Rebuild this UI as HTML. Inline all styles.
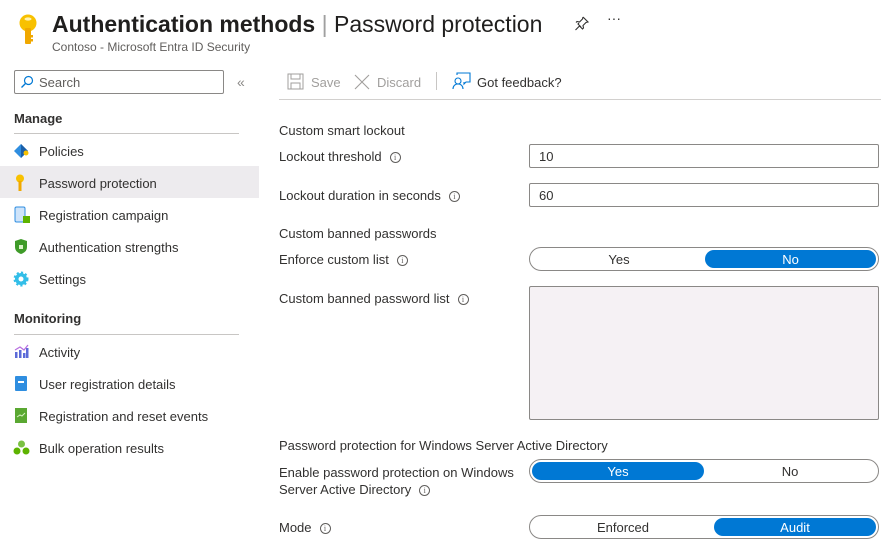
<!DOCTYPE html>
<html><head><meta charset="utf-8"><style>
*{margin:0;padding:0;box-sizing:border-box}
body{width:881px;height:542px;overflow:hidden;background:#fff;font-family:"Liberation Sans",sans-serif;color:#323130;font-size:13px;position:relative}
.a{position:absolute;white-space:nowrap}
.t{font-size:13px;line-height:16px}
.info{display:inline-block;width:11px;height:11px;border:1px solid #605e5c;border-radius:50%;font-size:8px;line-height:9px;text-align:center;color:#605e5c;vertical-align:middle;margin-left:8px;font-family:"Liberation Serif",serif}
.inp{position:absolute;left:529px;width:350px;height:24px;border:1px solid #8a8886;border-radius:2px;padding-left:9px;line-height:23px}
.tog{position:absolute;left:529px;width:350px;height:24px;border:1px solid #8a8886;border-radius:12px}
.tog span{position:absolute;top:2px;height:18px;line-height:19px;text-align:center;border-radius:9px}
.sel{background:#0078d4;color:#fff}
.hdr{font-weight:bold;font-size:13px}
</style></head><body>
<svg class="a" style="left:17px;top:14px" width="22" height="32" viewBox="0 0 22 32"><circle cx="11" cy="9" r="8.5" fill="#f8c100"/><rect x="8" y="14" width="6" height="16" rx="1" fill="#f0a800"/><rect x="13" y="21" width="3" height="2.5" fill="#f0a800"/><rect x="13" y="25" width="3" height="2.5" fill="#f0a800"/><ellipse cx="11" cy="5" rx="3.5" ry="1.6" fill="#fff3b0"/></svg>
<div class="a" style="left:52px;top:9px;font-size:23px;line-height:30px;color:#201f1e"><b style="font-weight:600">Authentication methods</b> <span style="color:#a0a0a0">|</span> Password protection</div>
<div class="a" style="left:52px;top:40px;font-size:12px;color:#605e5c">Contoso - Microsoft Entra ID Security</div>
<svg class="a" style="left:574px;top:15px" width="16" height="16" viewBox="0 0 16 16"><path d="M9 2l5 5-2 .5-3 3 .5 2.5-1 1-3-3-4 4M5 8l-1 1 3 3M9 2l-.5 2-3 3L3 6.5l-1 1" fill="none" stroke="#323130" stroke-width="1.1"/></svg>
<div class="a" style="left:607px;top:10px;font-size:14px;color:#323130">···</div>
<div class="a" style="left:14px;top:70px;width:210px;height:24px;border:1px solid #8a8886;border-radius:2px"></div>
<svg class="a" style="left:20px;top:75px" width="14" height="14" viewBox="0 0 14 14"><circle cx="8.5" cy="5.5" r="4" fill="none" stroke="#0078d4" stroke-width="1.2"/><path d="M5.5 8.5L1.5 12.5" stroke="#0078d4" stroke-width="1.3"/></svg>
<div class="a t" style="left:39px;top:75px;color:#605e5c">Search</div>
<div class="a" style="left:237px;top:74px;color:#8a8886;font-size:14px">«</div>
<div class="a t hdr" style="left:14px;top:111px">Manage</div>
<div class="a" style="left:14px;top:133px;width:225px;height:1px;background:#c8c6c4"></div>
<div class="a" style="left:0;top:166px;width:259px;height:32px;background:#edebee"></div>
<svg class="a" style="left:13px;top:143px" width="18" height="16" viewBox="0 0 18 16"><path d="M8 1l7 7-7 7-7-7z" fill="#2f8ee0"/><path d="M8 1l7 7-7 7z" fill="#1a5fa8"/><circle cx="13" cy="10" r="2.5" fill="#f8c100"/></svg>
<svg class="a" style="left:15px;top:174px" width="10" height="18" viewBox="0 0 10 18"><circle cx="5" cy="4.5" r="4" fill="#f8c100"/><rect x="3.5" y="7" width="3" height="10" fill="#f0a800"/></svg>
<svg class="a" style="left:14px;top:206px" width="16" height="18" viewBox="0 0 16 18"><rect x="1" y="1" width="10" height="15" rx="1.5" fill="#cfe4fa" stroke="#2f8ee0"/><rect x="9" y="10" width="7" height="7" fill="#5db300"/></svg>
<svg class="a" style="left:14px;top:238px" width="14" height="17" viewBox="0 0 14 17"><path d="M7 1l6 2v6c0 4-3 6-6 7-3-1-6-3-6-7V3z" fill="#3f9b29"/><rect x="5" y="7" width="4" height="4" fill="#d9f2c8"/></svg>
<svg class="a" style="left:13px;top:271px" width="16" height="16" viewBox="0 0 16 16"><circle cx="8" cy="8" r="6" fill="#32bee8" stroke="#32bee8" stroke-width="3" stroke-dasharray="2 2"/><circle cx="8" cy="8" r="2.5" fill="#fff"/></svg>
<div class="a t" style="left:39px;top:144px">Policies</div>
<div class="a t" style="left:39px;top:176px">Password protection</div>
<div class="a t" style="left:39px;top:208px">Registration campaign</div>
<div class="a t" style="left:39px;top:240px">Authentication strengths</div>
<div class="a t" style="left:39px;top:272px">Settings</div>
<div class="a t hdr" style="left:14px;top:311px">Monitoring</div>
<div class="a" style="left:14px;top:334px;width:225px;height:1px;background:#c8c6c4"></div>
<svg class="a" style="left:14px;top:344px" width="15" height="15" viewBox="0 0 15 15"><rect x="1" y="8" width="2.5" height="6" fill="#5c6bd8"/><rect x="5" y="6" width="2.5" height="8" fill="#5c6bd8"/><rect x="9" y="9" width="2.5" height="5" fill="#5c6bd8"/><rect x="12" y="4" width="2.5" height="10" fill="#5c6bd8"/><path d="M1 6l5-3 4 3 4-5" fill="none" stroke="#b86ee0" stroke-width="1.2"/></svg>
<svg class="a" style="left:15px;top:376px" width="12" height="16" viewBox="0 0 12 16"><rect x="0" y="0" width="12" height="15" rx="1" fill="#2f8ee0"/><rect x="3" y="5" width="6" height="2" fill="#fff"/></svg>
<svg class="a" style="left:15px;top:408px" width="12" height="15" viewBox="0 0 12 15"><rect x="0" y="0" width="12" height="15" fill="#5aa832"/><path d="M2 9l3-2 2 1 3-3" stroke="#d6f0c0" fill="none"/></svg>
<svg class="a" style="left:13px;top:440px" width="17" height="16" viewBox="0 0 17 16"><circle cx="8.5" cy="4" r="3.5" fill="#7ac143"/><circle cx="4" cy="11" r="3.5" fill="#5db300"/><circle cx="13" cy="11" r="3.5" fill="#5db300"/></svg>
<div class="a t" style="left:39px;top:345px">Activity</div>
<div class="a t" style="left:39px;top:377px">User registration details</div>
<div class="a t" style="left:39px;top:409px">Registration and reset events</div>
<div class="a t" style="left:39px;top:441px">Bulk operation results</div>
<svg class="a" style="left:287px;top:73px" width="17" height="17" viewBox="0 0 17 17"><rect x="1" y="1" width="15" height="15" fill="none" stroke="#a19f9d"/><rect x="4" y="1" width="9" height="5" fill="none" stroke="#a19f9d"/><rect x="4" y="10" width="9" height="6" fill="none" stroke="#a19f9d"/></svg>
<div class="a t" style="left:311px;top:75px;color:#a19f9d">Save</div>
<svg class="a" style="left:354px;top:74px" width="16" height="16" viewBox="0 0 16 16"><path d="M1 1l14 14M15 1L1 15" stroke="#a19f9d" stroke-width="1.1"/></svg>
<div class="a t" style="left:377px;top:75px;color:#a19f9d">Discard</div>
<div class="a" style="left:436px;top:72px;width:1px;height:18px;background:#c8c6c4"></div>
<svg class="a" style="left:452px;top:72px" width="19" height="18" viewBox="0 0 19 18"><path d="M5 3V1h13v9h-4l-2 2v-2" fill="none" stroke="#0078d4" stroke-width="1.1"/><circle cx="6" cy="9" r="3" fill="none" stroke="#0078d4" stroke-width="1.1"/><path d="M1 17c0-3 2-5 5-5s5 2 5 5" fill="none" stroke="#0078d4" stroke-width="1.1"/></svg>
<div class="a t" style="left:477px;top:75px">Got feedback?</div>
<div class="a" style="left:279px;top:99px;width:602px;height:1px;background:#d2d0ce"></div>
<div class="a t" style="left:279px;top:123px">Custom smart lockout</div>
<div class="a t" style="left:279px;top:149px">Lockout threshold<span class="info">i</span></div>
<div class="inp" style="top:144px">10</div>
<div class="a t" style="left:279px;top:188px">Lockout duration in seconds<span class="info">i</span></div>
<div class="inp" style="top:183px">60</div>
<div class="a t" style="left:279px;top:226px">Custom banned passwords</div>
<div class="a t" style="left:279px;top:252px">Enforce custom list<span class="info">i</span></div>
<div class="tog" style="top:247px"><span style="left:2px;width:174px">Yes</span><span class="sel" style="left:175px;width:171px">No</span></div>
<div class="a t" style="left:279px;top:291px">Custom banned password list<span class="info">i</span></div>
<div class="a" style="left:529px;top:286px;width:350px;height:134px;border:1px solid #8a8886;border-radius:2px;background:#f5f1f4"></div>
<div class="a t" style="left:279px;top:438px">Password protection for Windows Server Active Directory</div>
<div class="a t" style="left:279px;top:464px;line-height:17px">Enable password protection on Windows<br>Server Active Directory<span class="info">i</span></div>
<div class="tog" style="top:459px"><span class="sel" style="left:2px;width:172px">Yes</span><span style="left:174px;width:172px">No</span></div>
<div class="a t" style="left:279px;top:520px">Mode<span class="info">i</span></div>
<div class="tog" style="top:515px"><span style="left:2px;width:182px">Enforced</span><span class="sel" style="left:184px;width:162px">Audit</span></div>
</body></html>
